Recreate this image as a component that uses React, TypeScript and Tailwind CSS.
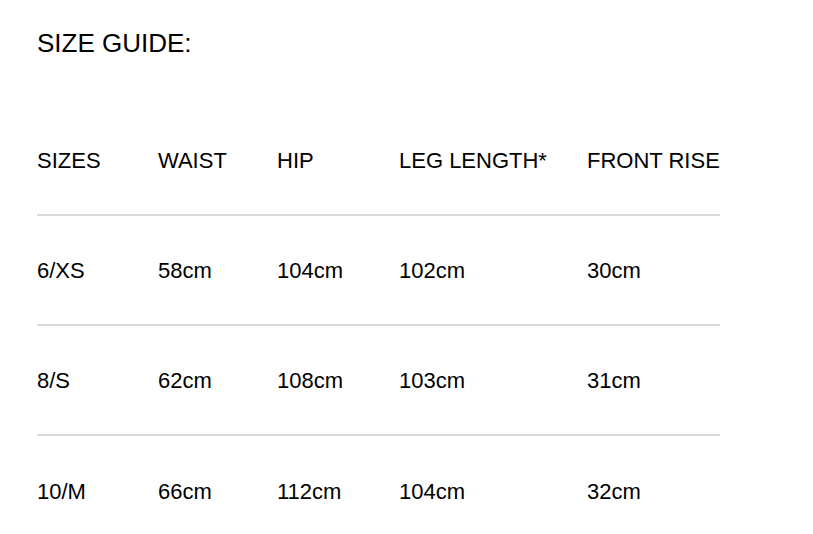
const headers = ["SIZES", "WAIST", "HIP", "LEG LENGTH*", "FRONT RISE"];

const rows = [
  ["6/XS", "58cm", "104cm", "102cm", "30cm"],
  ["8/S", "62cm", "108cm", "103cm", "31cm"],
  ["10/M", "66cm", "112cm", "104cm", "32cm"],
];

function Row({ cells, last }: { cells: string[]; last?: boolean }) {
  return (
    <div
      className={`grid h-[110px] grid-cols-[121px_119px_122px_188px_133px] items-center ${
        last ? "" : "border-b-2 border-[#d9d9d9]"
      }`}
    >
      {cells.map((c, i) => (
        <div key={i} className="pt-[2px] text-[22px] leading-none">
          {c}
        </div>
      ))}
    </div>
  );
}

export default function App() {
  return (
    <div
      className="min-h-screen bg-white pl-[37px] pt-[28px] text-black"
      style={{ fontFamily: '"Liberation Sans", Arial, sans-serif' }}
    >
      <h1 className="text-[26px] leading-[30px] font-normal">SIZE GUIDE:</h1>
      <div className="mt-[48px] w-[683px]">
        <Row cells={headers} />
        {rows.map((r, i) => (
          <Row key={r[0]} cells={r} last={i === rows.length - 1} />
        ))}
      </div>
    </div>
  );
}
